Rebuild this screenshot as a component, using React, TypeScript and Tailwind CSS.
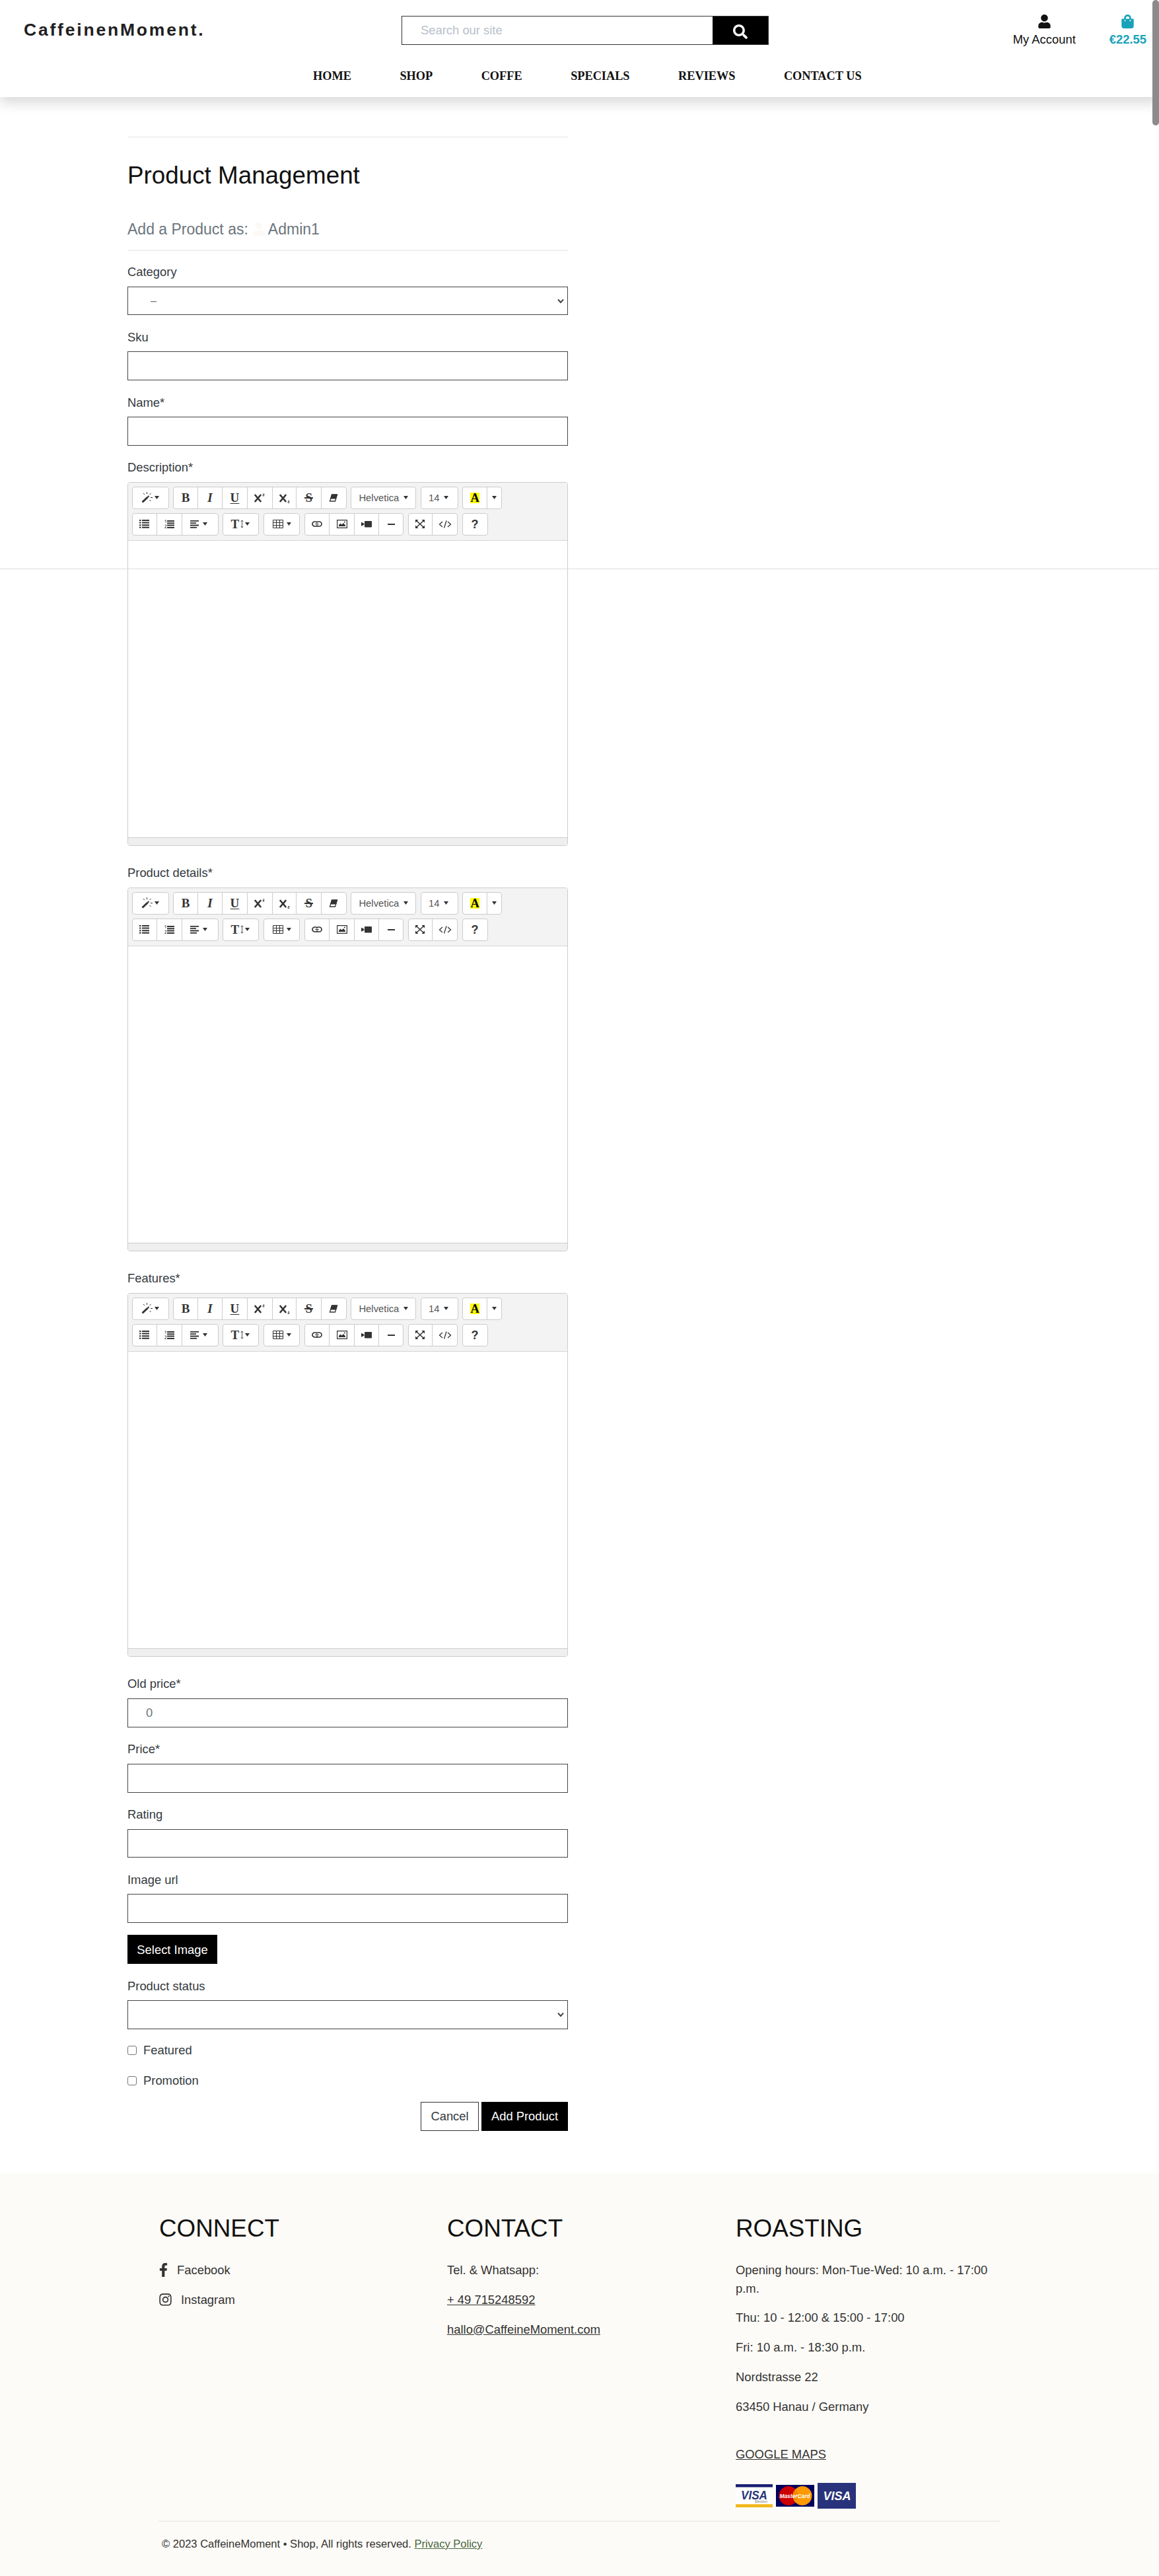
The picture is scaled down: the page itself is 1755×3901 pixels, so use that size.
import React from "react";
import { FaSearch, FaUser, FaShoppingBag, FaFacebookF, FaInstagram } from "react-icons/fa";

const NAV = ["HOME", "SHOP", "COFFE", "SPECIALS", "REVIEWS", "CONTACT US"];

function Header() {
  return (
    <header className="relative z-10 h-[147px] bg-white shadow-[0_9px_18px_rgba(0,0,0,0.15)]">
      <div className="flex h-[92px]">
        <a className="w-[572px] shrink-0 ml-9 mt-[30px] text-[26.5px] leading-[31px] font-bold tracking-[2.8px] text-[#212121]">
          CaffeinenMoment.
        </a>
        <form className="mt-6 flex h-11 w-[556px] border border-[#333]">
          <div className="flex-1 pl-7 text-[18.4px] leading-[42px] text-[#b7c0cb]">Search our site</div>
          <div className="flex w-[84px] items-center justify-center bg-black pt-1 text-white">
            <FaSearch size={22} />
          </div>
        </form>
        <div className="ml-auto mr-[19px] mt-[22px] flex gap-[51px] text-[18.4px] leading-7">
          <div className="flex flex-col items-center gap-[3px] text-[#111]">
            <FaUser size={21} />
            <span>My Account</span>
          </div>
          <div className="flex flex-col items-center gap-[3px] font-bold text-[#17a2b8]">
            <FaShoppingBag size={21} />
            <span>€22.55</span>
          </div>
        </div>
      </div>
      <nav className="flex gap-[73.5px] pl-[474px] pt-[9px] font-['Liberation_Serif',serif] text-[18.3px] leading-7 font-bold text-[#111]">
        {NAV.map((n) => (
          <a key={n}>{n}</a>
        ))}
      </nav>
    </header>
  );
}

function Label({ children }: { children: React.ReactNode }) {
  return <label className="mb-[9.2px] block h-[27.6px] text-[18.4px] leading-[29px]">{children}</label>;
}

function Field({ label, value, select }: { label: string; value?: string; select?: boolean }) {
  return (
    <div className="mb-[18.35px]">
      <Label>{label}</Label>
      <div className="flex h-[43.7px] items-center justify-between border border-[#444] pl-[27px] pr-[5px] text-[18.4px] text-[#6c757d]">
        <span className={select ? "pl-[7px] text-[16px]" : ""}>{value}</span>
        {select && (
          <svg width="10" height="8" viewBox="0 0 10 8" fill="none" stroke="#444" strokeWidth="2">
            <path d="M1 1.5 5 6l4-4.5" />
          </svg>
        )}
      </div>
    </div>
  );
}

const Caret = () => (
  <svg width="7" height="5" viewBox="0 0 7 5" fill="#333">
    <path d="M0 0h7L3.5 5z" />
  </svg>
);

const ICONS: Record<string, React.ReactNode> = {
  wand: (
    <svg width="18" height="17" viewBox="0 0 18 17" fill="none" stroke="#333">
      <path d="M1.5 15.5 9.5 8" strokeWidth="3" />
      <path d="M9.5 8l2-2" strokeWidth="2" />
      <path d="M8.5 0v3M3 2l2 2M14.5 2l-2 2M14 8.500h3M12.500 12l2 2" />
    </svg>
  ),
  sup: (
    <svg width="18" height="16" viewBox="0 0 18 16" fill="none" stroke="#333">
      <path d="M1.800 3l9.400 11M11.200 3 1.800 14" strokeWidth="2.600" />
      <path d="M14 2h2v1.500h-2v1.500h2.300" strokeWidth=".8" />
    </svg>
  ),
  sub: (
    <svg width="18" height="16" viewBox="0 0 18 16" fill="none" stroke="#333">
      <path d="M1.800 3l9.400 11M11.200 3 1.800 14" strokeWidth="2.600" />
      <path d="M14 12.500h2v1.500h-2v1.500h2.300" strokeWidth=".8" />
    </svg>
  ),
  eraser: (
    <svg width="14" height="12" viewBox="0 0 14 12" fill="none" stroke="#333">
      <path d="M4.500 1h8L9.500 11h-8z" strokeWidth="1.300" />
      <path d="M4.500 1h8L10.800 7H2.700z" fill="#333" />
    </svg>
  ),
  ul: (
    <svg width="15" height="13" viewBox="0 0 15 13" fill="#333">
      <path d="M0 0h2.500v2H0zM0 3.600h2.500v2H0zM0 7.200h2.500v2H0zM0 10.800h2.500v2H0zM4 0h11v2H4zM4 3.600h11v2H4zM4 7.200h11v2H4zM4 10.800h11v2H4z" />
    </svg>
  ),
  ol: (
    <svg width="15" height="13" viewBox="0 0 15 13" fill="#333">
      <path d="M4 1h11v2H4zM4 4.300h11v2H4zM4 7.600h11v2H4zM4 10.900h11v2H4z" />
      <path d="M.5 1.500 2 .5v4M.5 8h2v2l-2 2.500h2.500" fill="none" stroke="#333" strokeWidth=".8" />
    </svg>
  ),
  align: (
    <svg width="13" height="12" viewBox="0 0 13 12" fill="#333">
      <path d="M0 0h13v1.800H0zM0 3.300h9v1.800H0zM0 6.600h13v1.800H0zM0 9.900h10v1.800H0z" />
    </svg>
  ),
  height: (
    <svg width="5" height="13" viewBox="0 0 5 13" fill="none" stroke="#444" strokeWidth=".9">
      <path d="M2.500 1v11M.7 2.800l1.800-2 1.800 2M.7 10.200l1.800 2 1.800-2" />
    </svg>
  ),
  table: (
    <svg width="16" height="13" viewBox="0 0 16 13" fill="none" stroke="#333">
      <path d="M.5.5h15v12H.5zM.5 4.500h15M.5 8.500h15M5.500.5v12M10.500.5v12" />
    </svg>
  ),
  link: (
    <svg width="16" height="9" viewBox="0 0 16 9" fill="none" stroke="#333" strokeWidth="1.700">
      <path d="M9 2.200C8.500 1.300 7.500 1 6.500 1h-2a3.500 3.500 0 0 0 0 7h2c1 0 2-.6 2.500-1.500M7 6.800C7.500 7.600 8.500 8 9.500 8h2a3.500 3.500 0 0 0 0-7h-2C8.500 1 7.500 1.600 7 2.500" />
      <path d="M5.500 4.500h5" strokeWidth="1.400" />
    </svg>
  ),
  picture: (
    <svg width="16" height="13" viewBox="0 0 16 13" fill="none" stroke="#333">
      <path d="M.6.6h14.800v11.800H.6z" strokeWidth="1.200" />
      <path d="M3 10V8l2.500-2.500L7.500 7.500 10 5l3 3.500V10z" fill="#333" stroke="none" />
      <circle cx="11.800" cy="3.500" r="1" fill="#333" stroke="none" />
    </svg>
  ),
  video: (
    <svg width="16" height="10" viewBox="0 0 16 10" fill="#333">
      <rect x="5" width="11" height="9.500" rx="1" />
      <path d="M0 1.800l4.300 2v2l-4.300 2z" />
    </svg>
  ),
  minus: <span className="h-[2px] w-[11px] bg-[#333]" />,
  full: (
    <svg width="14" height="13" viewBox="0 0 14 13" fill="none" stroke="#333" strokeWidth="1.500">
      <path d="M1.500 1.500l11 10M12.500 1.500l-11 10" />
      <path d="M0 0h4.500L0 4.500zM14 0H9.500L14 4.500zM0 13h4.500L0 8.500zM14 13H9.500L14 8.500z" fill="#333" stroke="none" />
    </svg>
  ),
  code: (
    <svg width="20" height="12" viewBox="0 0 20 12" fill="none" stroke="#333" strokeWidth="1.300">
      <path d="M6 2 1.500 6 6 10M14 2l4.500 4L14 10M12 .5 8.500 11.500" />
    </svg>
  ),
};

function Group({ children }: { children: React.ReactNode }) {
  return (
    <div className="flex h-[34.4px] divide-x divide-[#ccc] rounded-[4px] border border-[#ccc] bg-white text-[#333]">
      {children}
    </div>
  );
}

function Btn({ w, children }: { w: string; children: React.ReactNode }) {
  return <div className={`flex items-center justify-center ${w}`}>{children}</div>;
}

const serif = "font-['Liberation_Serif',serif] text-[19px] leading-none";

function Editor({ label }: { label: string }) {
  return (
    <div className="mb-[26.2px]">
      <Label>{label}</Label>
      <div className="h-[551px] overflow-hidden rounded-[4px] border border-[#ccc] flex flex-col">
        <div className="flex h-[87.5px] shrink-0 flex-col gap-[5.7px] border-b border-[#d5d5d5] bg-[#f3f3f3] pl-[5.6px] pt-[5.6px]">
          <div className="flex gap-[6.4px]">
            <Group>
              <Btn w="w-[54px] gap-[2px]">{ICONS.wand}<Caret /></Btn>
            </Group>
            <Group>
              <Btn w="w-[37px]"><b className={serif}>B</b></Btn>
              <Btn w="w-[37px]"><b className={`italic ${serif}`}>I</b></Btn>
              <Btn w="w-[38px]"><b className={`underline underline-offset-2 ${serif}`}>U</b></Btn>
              <Btn w="w-[38px]">{ICONS.sup}</Btn>
              <Btn w="w-[36.500px]">{ICONS.sub}</Btn>
              <Btn w="w-[37.500px]">
                <b className={`relative px-px after:absolute after:inset-x-0 after:top-[9px] after:h-[1.5px] after:bg-[#333] ${serif}`}>S</b>
              </Btn>
              <Btn w="w-[37px]">{ICONS.eraser}</Btn>
            </Group>
            <Group>
              <Btn w="w-[97px] gap-[7px] text-[14.8px] text-[#555]"><span>Helvetica</span><Caret /></Btn>
            </Group>
            <Group>
              <Btn w="w-[55px] gap-[6px] pr-[3px] text-[14.8px] text-[#555]"><span>14</span><Caret /></Btn>
            </Group>
            <Group>
              <Btn w="w-[37px]">
                <b className="flex h-4 w-[14px] items-center justify-center bg-[#ff0] font-['Liberation_Serif',serif] text-[18.4px] leading-none text-black">A</b>
              </Btn>
              <Btn w="w-[21px]"><Caret /></Btn>
            </Group>
          </div>
          <div className="flex gap-[6.4px]">
            <Group>
              <Btn w="w-[37.500px]">{ICONS.ul}</Btn>
              <Btn w="w-[38px]">{ICONS.ol}</Btn>
              <Btn w="w-[53.500px] gap-[6px] pr-[3px]">{ICONS.align}<Caret /></Btn>
            </Group>
            <Group>
              <Btn w="w-[53.500px] gap-[2px] pr-[2px]"><b className={serif}>T</b>{ICONS.height}<Caret /></Btn>
            </Group>
            <Group>
              <Btn w="w-[53.500px] gap-[5px]">{ICONS.table}<Caret /></Btn>
            </Group>
            <Group>
              <Btn w="w-[37.500px]">{ICONS.link}</Btn>
              <Btn w="w-[37.500px]">{ICONS.picture}</Btn>
              <Btn w="w-[37px]">{ICONS.video}</Btn>
              <Btn w="w-[36.500px]">{ICONS.minus}</Btn>
            </Group>
            <Group>
              <Btn w="w-[36.500px]">{ICONS.full}</Btn>
              <Btn w="w-[37px]">{ICONS.code}</Btn>
            </Group>
            <Group>
              <Btn w="w-[37px]"><b className="text-[18px] leading-none">?</b></Btn>
            </Group>
          </div>
        </div>
        <div className="flex-1" />
        <div className="h-[12.5px] shrink-0 border-t border-[#ccc] bg-[#efefef]" />
      </div>
    </div>
  );
}

function Check({ label }: { label: string }) {
  return (
    <div className="mb-[18.4px] flex h-[27.6px] items-center gap-[10px] text-[18.4px] leading-[27.6px]">
      <span className="size-[14px] rounded-[3px] border border-[#767676] bg-white" />
      {label}
    </div>
  );
}

function Footer() {
  return (
    <footer className="h-[610px] bg-[#fcfbf7] pt-[59px] pl-[241px] text-[18.4px] leading-[27.6px] text-[#333]">
      <div className="flex h-[467px]">
        <div className="w-[436px]">
          <h2 className="mb-[24px] text-[36.8px] leading-[50px] text-[#111]">CONNECT</h2>
          <p className="mb-[17.2px] flex items-center"><FaFacebookF size={21} className="mr-[10px] -ml-1 w-[21px]" />Facebook</p>
          <p className="flex items-center"><FaInstagram size={21} className="mr-[13px] -ml-px" />Instagram</p>
        </div>
        <div className="w-[437px]">
          <h2 className="mb-[24px] text-[36.8px] leading-[50px] text-[#111]">CONTACT</h2>
          <p className="mb-[17.2px]">Tel. &amp; Whatsapp:</p>
          <p className="mb-[17.2px] underline">+ 49 715248592</p>
          <p className="underline">hallo@CaffeineMoment.com</p>
        </div>
        <div className="w-[402px]">
          <h2 className="mb-[24px] text-[36.8px] leading-[50px] text-[#111]">ROASTING</h2>
          <p className="mb-[17.2px]">Opening hours: Mon-Tue-Wed: 10 a.m. - 17:00 p.m.</p>
          <p className="mb-[17.2px]">Thu: 10 - 12:00 &amp; 15:00 - 17:00</p>
          <p className="mb-[17.2px]">Fri: 10 a.m. - 18:30 p.m.</p>
          <p className="mb-[17.2px]">Nordstrasse 22</p>
          <p className="mb-[44.8px]">63450 Hanau / Germany</p>
          <p className="underline">GOOGLE MAPS</p>
          <div className="mt-[29px] flex h-[39px] items-center font-bold italic">
            <svg width="56" height="35" viewBox="0 0 56 35" className="mr-[5px]">
              <path fill="#fff" d="M0 0h56v35H0z" />
              <path fill="#1a1f71" d="M0 0h56v4.500H0z" />
              <path fill="#f2b71b" d="M0 30.200h56V35H0z" />
              <text x="8" y="22.500" fontSize="17.500" fill="#28337b" textLength="40" lengthAdjust="spacingAndGlyphs">VISA</text>
              <text x="29" y="28" fontSize="5.500" fill="#777" fontWeight="400" fontStyle="normal" textLength="19">Electron</text>
            </svg>
            <svg width="58" height="33" viewBox="0 0 58 33" className="mr-[5px]">
              <path fill="#00005f" d="M0 0h58v33H0z" />
              <circle cx="19" cy="16.500" r="14.500" fill="#c00" />
              <circle cx="40" cy="16.500" r="14.500" fill="#f90" />
              <path d="M26 10h6M25 13h8M25 16h8M25 19h8M26 22h6" stroke="#d60" />
              <text x="5.500" y="20" fontSize="9.500" fill="#fff" textLength="46" lengthAdjust="spacingAndGlyphs">MasterCard</text>
            </svg>
            <svg width="58" height="39" viewBox="0 0 58 39">
              <path fill="#28337b" d="M0 0h58v39H0z" />
              <text x="8.500" y="26" fontSize="18" fill="#fff" textLength="42" lengthAdjust="spacingAndGlyphs">VISA</text>
            </svg>
          </div>
        </div>
      </div>
      <div className="-ml-px w-[1275px] border-t-2 border-[#efeeeb] pl-[5px] pt-[20px] text-[16.55px] leading-[28px]">
        © 2023 CaffeineMoment • Shop, All rights reserved. <a className="text-[#4a6741] underline">Privacy Policy</a>
      </div>
    </footer>
  );
}

export default function App() {
  return (
    <div className="relative h-[3901px] w-[1755px] overflow-hidden bg-white font-['Liberation_Sans',Arial,sans-serif] text-[#343a40]">
      <Header />
      <main className="ml-[193px] h-[3144px] w-[667px] pt-[60px]">
        <div className="h-px bg-[#e5e5e5]" />
        <h2 className="mt-[36px] text-[36.8px] leading-[44.2px] text-[#111]">Product Management</h2>
        <h5 className="mt-[45.6px] flex items-center text-[23px] leading-[27.6px] text-[#6c757d]">
          Add a Product as:
          <FaUser size={21} className="ml-[5px] mr-[4px] text-[#fbfaf6]" />
          Admin1
        </h5>
        <div className="mt-[16.5px] mb-[17px] h-[2px] bg-[#efefef]" />
        <Field label="Category" value="–" select />
        <Field label="Sku" />
        <Field label="Name*" />
        <Editor label="Description*" />
        <Editor label="Product details*" />
        <Editor label="Features*" />
        <Field label="Old price*" value="0" />
        <Field label="Price*" />
        <Field label="Rating" />
        <Field label="Image url" />
        <button className="mb-[18.4px] block h-[43.7px] w-[136px] bg-black text-[18.4px] text-white">Select Image</button>
        <Field label="Product status" select />
        <Check label="Featured" />
        <Check label="Promotion" />
        <div className="flex justify-end gap-1 text-[18.4px]">
          <button className="h-[43.7px] w-[88px] border border-[#333]">Cancel</button>
          <button className="h-[43.7px] w-[131px] bg-black text-white">Add Product</button>
        </div>
      </main>
      <Footer />
      {/* page divider that runs across the editor area */}
      <div className="absolute left-0 top-[861px] h-px w-full bg-[#dedede]" />
      {/* scrollbar thumb */}
      <div className="absolute right-0 top-0 z-20 h-[190px] w-[10px] rounded-full bg-[#8b8b8b]" />
    </div>
  );
}
